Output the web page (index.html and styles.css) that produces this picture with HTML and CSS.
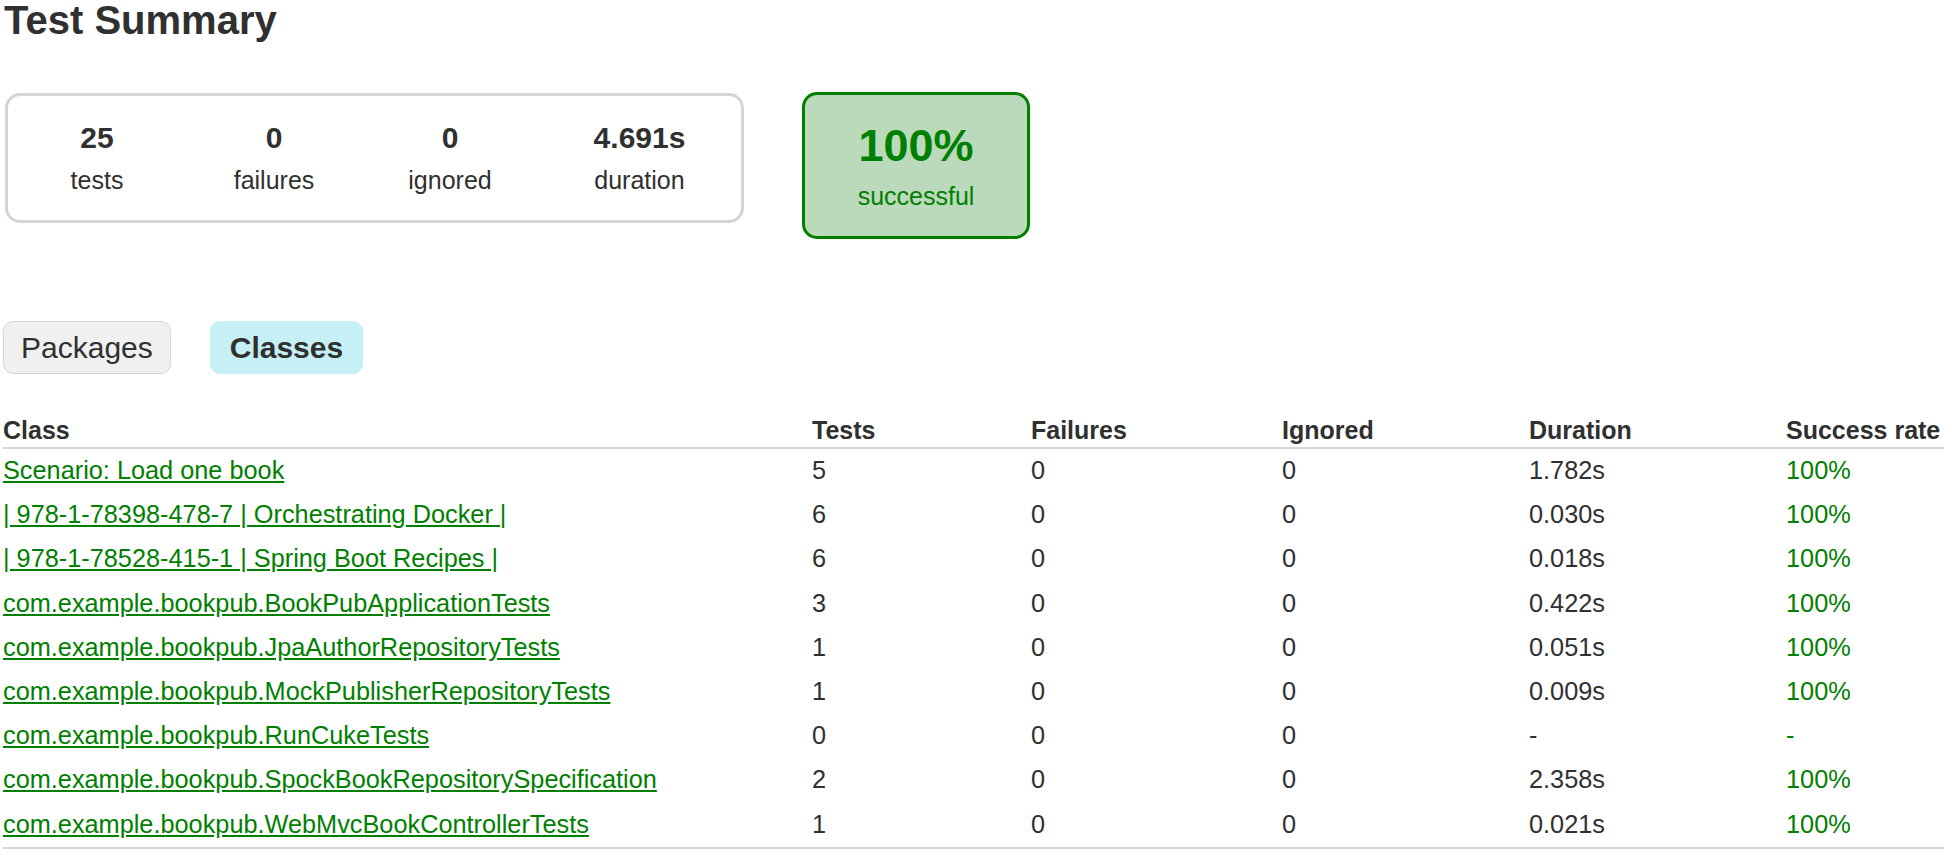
FILE: index.html
```html
<!DOCTYPE html>
<html lang="en">
<head>
  <meta charset="UTF-8">
  <title>Test results - Test Summary</title>
  <link rel="stylesheet" href="styles.css">
</head>
<body>
  <div id="content">
    <h1>Test Summary</h1>

    <!-- Summary boxes -->
    <div class="summary">
      <div class="summaryGroup">
        <div class="infoBox" id="tests">
          <div class="counter">25</div>
          <p>tests</p>
        </div>
        <div class="infoBox" id="failures">
          <div class="counter">0</div>
          <p>failures</p>
        </div>
        <div class="infoBox" id="ignored">
          <div class="counter">0</div>
          <p>ignored</p>
        </div>
        <div class="infoBox" id="duration">
          <div class="counter">4.691s</div>
          <p>duration</p>
        </div>
      </div>
      <div class="infoBox success" id="successRate">
        <div class="percent">100%</div>
        <p>successful</p>
      </div>
    </div>

    <!-- Tabs -->
    <ul class="tabLinks">
      <li><a href="#tab0">Packages</a></li>
      <li class="selected"><a href="#tab1">Classes</a></li>
    </ul>

    <div id="tab1" class="tab">
      <table>
        <colgroup>
          <col class="c-class">
          <col class="c-tests">
          <col class="c-failures">
          <col class="c-ignored">
          <col class="c-duration">
          <col class="c-rate">
        </colgroup>
        <thead>
          <tr>
            <th>Class</th>
            <th>Tests</th>
            <th>Failures</th>
            <th>Ignored</th>
            <th>Duration</th>
            <th>Success rate</th>
          </tr>
        </thead>
        <tbody>
          <tr>
            <td class="success"><a href="#">Scenario: Load one book</a></td>
            <td>5</td><td>0</td><td>0</td><td>1.782s</td>
            <td class="success">100%</td>
          </tr>
          <tr>
            <td class="success"><a href="#">| 978-1-78398-478-7 | Orchestrating Docker |</a></td>
            <td>6</td><td>0</td><td>0</td><td>0.030s</td>
            <td class="success">100%</td>
          </tr>
          <tr>
            <td class="success"><a href="#">| 978-1-78528-415-1 | Spring Boot Recipes |</a></td>
            <td>6</td><td>0</td><td>0</td><td>0.018s</td>
            <td class="success">100%</td>
          </tr>
          <tr>
            <td class="success"><a href="#">com.example.bookpub.BookPubApplicationTests</a></td>
            <td>3</td><td>0</td><td>0</td><td>0.422s</td>
            <td class="success">100%</td>
          </tr>
          <tr>
            <td class="success"><a href="#">com.example.bookpub.JpaAuthorRepositoryTests</a></td>
            <td>1</td><td>0</td><td>0</td><td>0.051s</td>
            <td class="success">100%</td>
          </tr>
          <tr>
            <td class="success"><a href="#">com.example.bookpub.MockPublisherRepositoryTests</a></td>
            <td>1</td><td>0</td><td>0</td><td>0.009s</td>
            <td class="success">100%</td>
          </tr>
          <tr>
            <td class="success"><a href="#">com.example.bookpub.RunCukeTests</a></td>
            <td>0</td><td>0</td><td>0</td><td>-</td>
            <td class="success">-</td>
          </tr>
          <tr>
            <td class="success"><a href="#">com.example.bookpub.SpockBookRepositorySpecification</a></td>
            <td>2</td><td>0</td><td>0</td><td>2.358s</td>
            <td class="success">100%</td>
          </tr>
          <tr>
            <td class="success"><a href="#">com.example.bookpub.WebMvcBookControllerTests</a></td>
            <td>1</td><td>0</td><td>0</td><td>0.021s</td>
            <td class="success">100%</td>
          </tr>
        </tbody>
      </table>
    </div>
  </div>
</body>
</html>
```

FILE: styles.css
```css
/* General styles */
body {
  margin: 0;
  padding: 0;
  font-family: "Liberation Sans", Arial, sans-serif;
  font-size: 25px;
  color: #303030;
  background: #fff;
}

a, a:visited {
  color: #303030;
}

#content {
  padding: 0 0 0 3px;
}

#content h1 {
  margin: 0 0 52px 1px;
  font-size: 40px;
  line-height: 40px;
  white-space: nowrap;
}

/* Summary */
.summary {
  display: flex;
  align-items: flex-start;
}

.summaryGroup {
  display: grid;
  grid-template-columns: 178px 176px 176px 203px;
  width: 733px;
  margin: 1px 0 0 2px;
  border: solid 3px #d4d4d4;
  border-radius: 15px;
}

.infoBox {
  text-align: center;
  padding: 25px 0 25px;
}

.infoBox p {
  margin: 0;
}

.counter {
  font-size: 30px;
  font-weight: bold;
  margin-bottom: 11px;
}

.percent {
  font-size: 45px;
  font-weight: bold;
  margin-bottom: 10px;
}

#successRate {
  width: 222px;
  margin-left: 58px;
  border: solid 3px #d0d0d0;
  border-radius: 15px;
}

.success, .success a, .success a:visited {
  color: #008000;
}

#successRate.success {
  background-color: #bbd9bb;
  border-color: #008000;
}

/* Tabs */
ul.tabLinks {
  display: flex;
  margin: 82px 0 0;
  padding: 0;
  list-style: none;
}

ul.tabLinks li {
  height: 51px;
  padding: 0 17px;
  margin-right: 39px;
  border: solid 1px #d4d4d4;
  border-radius: 10px;
  background-color: #f0f0f0;
}

ul.tabLinks li.selected {
  padding: 0 19px;
  background-color: #c5f0f5;
  border-color: #c5f0f5;
}

ul.tabLinks li.selected a {
  font-weight: bold;
}

ul.tabLinks a {
  display: block;
  font-size: 30px;
  line-height: 51px;
  text-decoration: none;
  outline: none;
}

/* Classes table */
div.tab {
  margin-top: 41px;
}

div.tab table {
  width: 1941px;
  table-layout: fixed;
  border-collapse: collapse;
  border-bottom: solid 2px #d6d6d6;
}

col.c-class { width: 809px; }
col.c-tests { width: 219px; }
col.c-failures { width: 251px; }
col.c-ignored { width: 247px; }
col.c-duration { width: 257px; }
col.c-rate { width: 158px; }

div.tab th {
  text-align: left;
  white-space: nowrap;
  padding: 0 0 2px;
  line-height: 30px;
  border-bottom: solid 2px #d6d6d6;
}

div.tab td {
  white-space: nowrap;
  padding: 7px 0 8px;
  font-size: 25.3px;
  line-height: 29.2px;
}
```
